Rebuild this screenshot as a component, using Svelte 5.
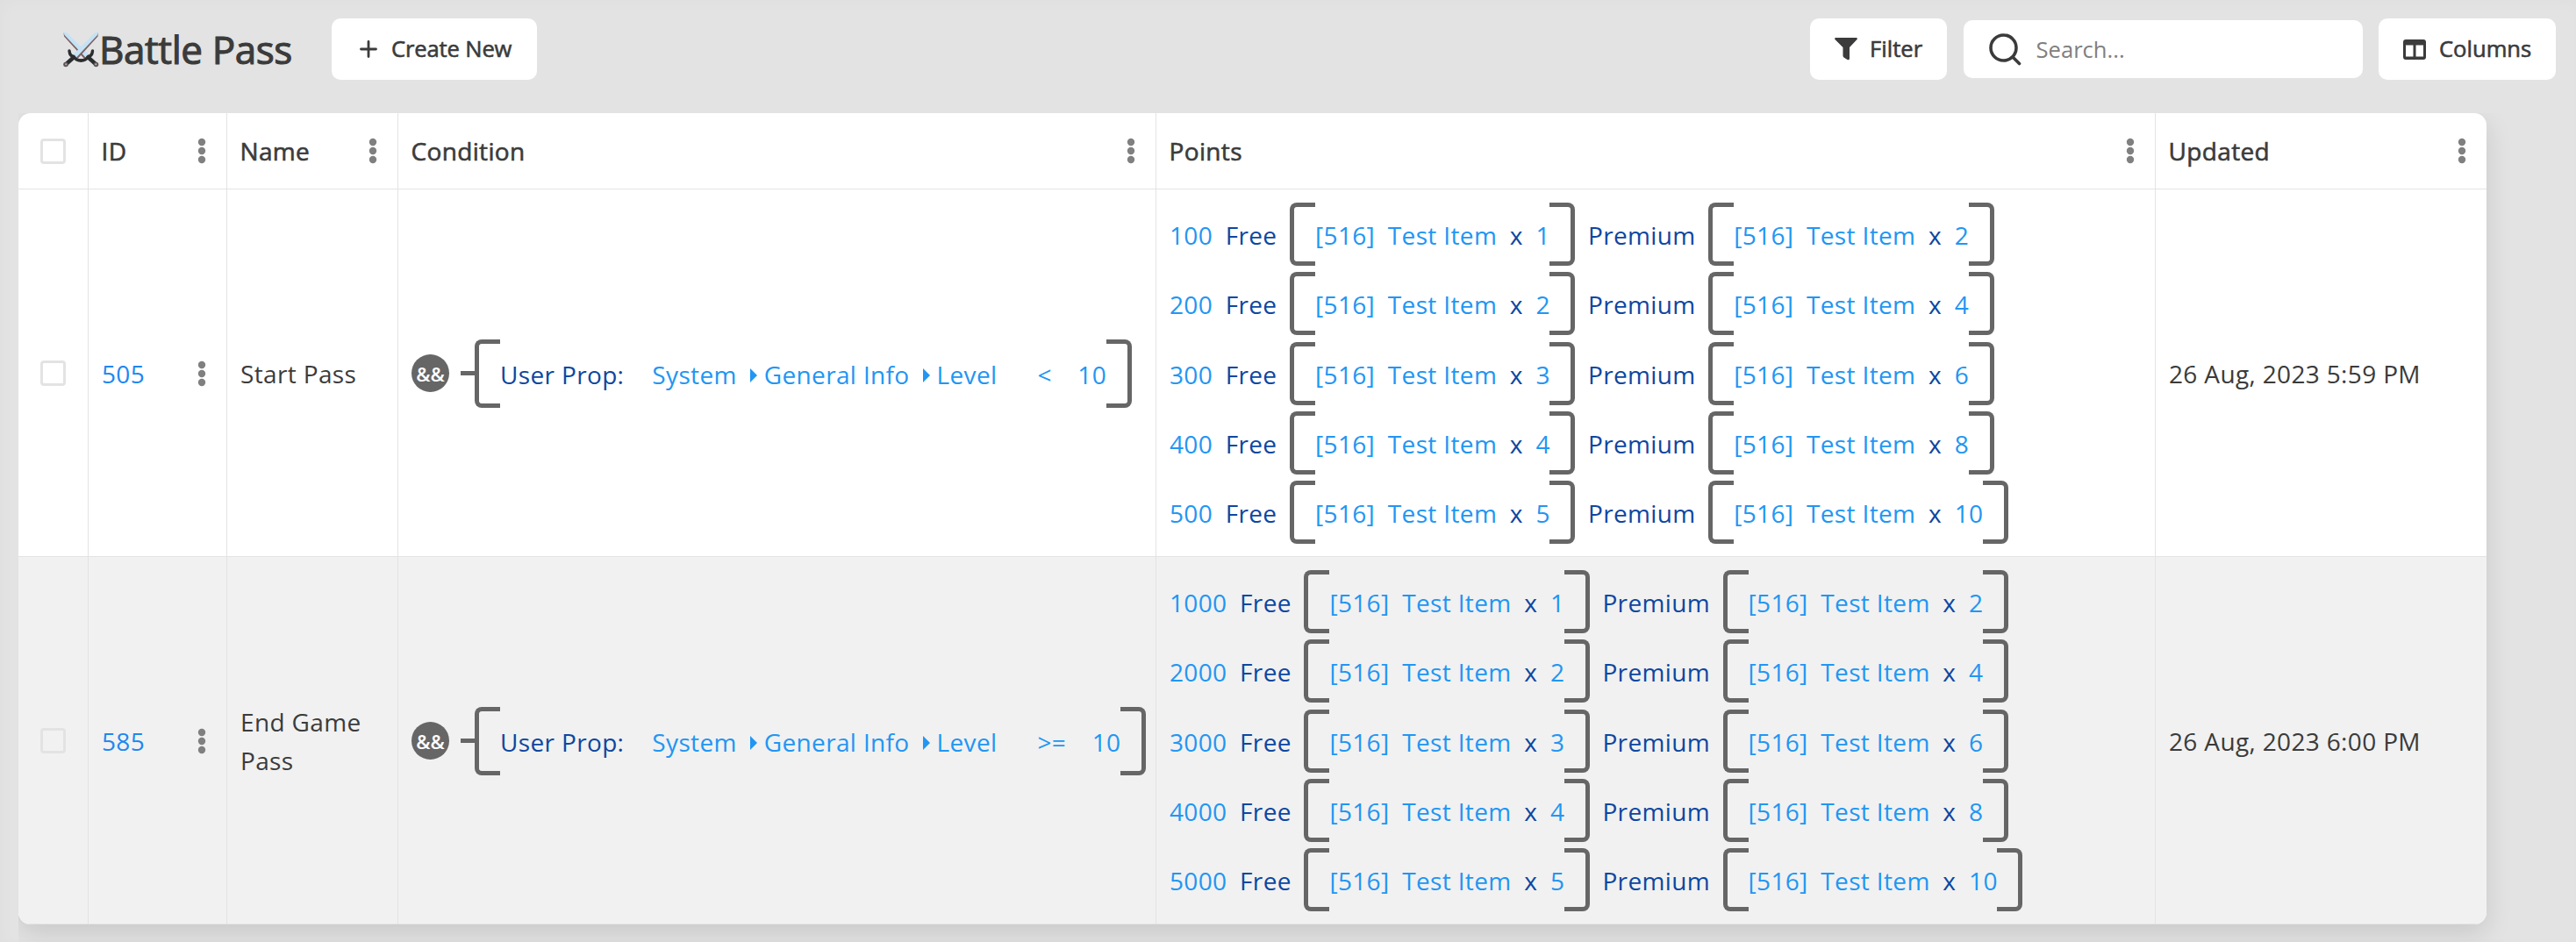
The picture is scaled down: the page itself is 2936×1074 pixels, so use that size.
<script lang="ts">
  type Point = { at: number; free: number; premium: number };

  const makePoints = (step: number): Point[] =>
    [1, 2, 3, 4, 5].map((n) => ({ at: n * step, free: n, premium: n * 2 }));

  const columns = ["ID", "Name", "Condition", "Points", "Updated"];

  const rows = [
    { id: 505, name: "Start Pass", op: "<", level: 10, points: makePoints(100), updated: "26 Aug, 2023 5:59 PM" },
    { id: 585, name: "End Game Pass", op: ">=", level: 10, points: makePoints(1000), updated: "26 Aug, 2023 6:00 PM" },
  ];
</script>

{#snippet dots()}
  <svg class="dots" width="10" height="30" viewBox="0 0 10 30">
    <circle cx="5" cy="5" r="4.2" />
    <circle cx="5" cy="15" r="4.2" />
    <circle cx="5" cy="25" r="4.2" />
  </svg>
{/snippet}

{#snippet sword()}
  <path d="M0.5 0.5L4.5 1.5L29 26L25 30L1 5Z" fill="#c3e2f6" />
  <path d="M0.5 1L1 5.500L24 31L25.500 29.500L1.500 4Z" fill="#7d6064" />
  <path d="M20 33Q26 33 28 29Q33 28 33.500 22" fill="none" stroke="#2b2d2f" stroke-width="3.4" stroke-linecap="round" />
  <path d="M27 28L37 37" stroke="#2b2d2f" stroke-width="4.4" />
  <circle cx="37.5" cy="37.5" r="2.8" fill="#5c5458" />
  <circle cx="37.3" cy="37.3" r="1.1" fill="#b9aeb3" />
{/snippet}

{#snippet reward(count: number)}
  <span class="bracket">
    <span class="light">[516]</span>
    <span class="light">Test Item</span>
    <span class="dark">x</span>
    <span class="light">{count}</span>
  </span>
{/snippet}

<main>
  <header>
    <h1>
      <svg width="41" height="41" viewBox="0 0 41 41">
        {@render sword()}
        <g transform="translate(40.5 0) scale(-1 1)">{@render sword()}</g>
      </svg>
      <span>Battle Pass</span>
    </h1>
    <button class="create">
      <svg width="20" height="20" viewBox="0 0 20 20"><path d="M10 1.5V18.5M1.5 10H18.5" stroke="#3b3b3b" stroke-width="2.8" stroke-linecap="round" /></svg>
      <span>Create New</span>
    </button>
    <div class="tools">
      <button class="filter">
        <svg width="26" height="26" viewBox="0 0 26 26"><path d="M1 0H25Q26.5 0.5 25.5 2L17 11V24Q16.5 26 14.5 25L10.5 22.5Q9.5 21.5 9.5 20.5V11L0.5 2Q-0.5 0.5 1 0Z" fill="#3b3b3b" /></svg>
        <span>Filter</span>
      </button>
      <label class="search">
        <svg width="37" height="37" viewBox="0 0 37 37" fill="none" stroke="#3b3b3b" stroke-width="3.6" stroke-linecap="round">
          <circle cx="16.5" cy="16.5" r="14.5" />
          <path d="M27.5 27.5L34.5 34.5" />
        </svg>
        <input type="text" placeholder="Search..." />
      </label>
      <button class="cols">
        <svg width="26" height="23" viewBox="0 0 26 23"><path fill="#3b3b3b" fill-rule="evenodd" d="M3 0H23Q26 0 26 3V20Q26 23 23 23H3Q0 23 0 20V3Q0 0 3 0ZM3 6.5V19.5H11.5V6.5ZM14.5 6.5V19.5H23V6.5Z" /></svg>
        <span>Columns</span>
      </button>
    </div>
  </header>

  <div class="wrap">
    <div class="table">
      <div class="row head">
        <div class="cell check"><span class="box"></span></div>
        {#each columns as title}
          <div class="cell title"><span>{title}</span>{@render dots()}</div>
        {/each}
      </div>
      {#each rows as row}
        <div class="row">
          <div class="cell check"><span class="box"></span></div>
          <div class="cell id"><span class="link">{row.id}</span>{@render dots()}</div>
          <div class="cell">{row.name}</div>
          <div class="cell">
            <span class="and">&&</span>
            <span class="dash"></span>
            <span class="bracket tall">
              <span class="dark">User Prop:</span>
              <span class="light path">System<i></i>General Info<i></i>Level</span>
              <span class="light op">{row.op}</span>
              <span class="light">{row.level}</span>
            </span>
          </div>
          <div class="cell points">
            {#each row.points as point}
              <div class="point">
                <span class="light">{point.at}</span>
                <span class="dark">Free</span>
                {@render reward(point.free)}
                <span class="dark">Premium</span>
                {@render reward(point.premium)}
              </div>
            {/each}
          </div>
          <div class="cell">{row.updated}</div>
        </div>
      {/each}
    </div>
  </div>
</main>

<style>
  :global(body) {
    background: #e3e3e3;
  }
  main {
    height: 1074px;
    box-sizing: border-box;
    overflow: hidden;
    box-shadow: inset 4px 4px 16px rgba(0, 0, 0, 0.02);
    font-family: "Open Sans", sans-serif;
    font-size: 28px;
    color: #3b3b3b;
  }
  header {
    display: flex;
    align-items: center;
    height: 112px;
    padding: 0 23px 0 72px;
    box-sizing: border-box;
    margin-bottom: 17px;
  }
  h1 {
    display: flex;
    align-items: center;
    width: 306px;
    margin: 0;
    font-size: 44px;
    font-weight: 400;
    letter-spacing: -0.4px;
    white-space: nowrap;
    -webkit-text-stroke: 1.1px #3b3b3b;
  }
  button {
    display: flex;
    align-items: center;
    height: 70px;
    padding: 0 0 0 28px;
    border: none;
    border-radius: 10px;
    box-sizing: border-box;
    background: #fff;
    color: #3b3b3b;
    font-family: inherit;
    font-size: 25.6px;
    font-weight: 400;
    white-space: nowrap;
    -webkit-text-stroke: 0.6px #3b3b3b;
  }
  button span {
    padding-bottom: 1px;
  }
  .create {
    width: 234px;
    gap: 16px;
    padding-left: 32px;
    letter-spacing: -0.15px;
  }
  .tools {
    display: flex;
    align-items: center;
    gap: 18.5px;
    margin-left: auto;
  }
  .filter {
    width: 156px;
    gap: 14px;
  }
  .search {
    display: flex;
    align-items: center;
    gap: 17px;
    width: 455px;
    height: 66px;
    padding-left: 29px;
    box-sizing: border-box;
    border-radius: 10px;
    background: #fff;
  }
  .search input {
    width: 340px;
    padding: 0;
    border: none;
    outline: none;
    background: none;
    font-family: inherit;
    font-size: 25.6px;
  }
  .search input::placeholder {
    color: #808080;
  }
  .cols {
    width: 202px;
    gap: 15px;
  }
  .wrap {
    margin-left: 21px;
    clip-path: inset(0 0 -40px 0);
  }
  .table {
    width: 2813px;
    border-radius: 14px;
    background: #fff;
    box-shadow: 0 10px 30px rgba(0, 0, 0, 0.12);
    overflow: hidden;
    letter-spacing: 0.35px;
  }
  .row {
    display: grid;
    grid-template-columns: 80px 158px 195px 864px 1139px 377px;
    height: 419px;
    box-sizing: border-box;
    border-bottom: 1px solid #e3e3e3;
  }
  .row.head {
    height: 87px;
  }
  .row:last-child {
    background: #f1f1f1;
  }
  .cell {
    display: flex;
    align-items: center;
    padding: 1px 0 0 15px;
    box-sizing: border-box;
    border-right: 1px solid #e3e3e3;
    line-height: 44px;
  }
  .cell:last-child {
    border-right: none;
  }
  .cell.check {
    justify-content: center;
    padding: 1px 0 0;
  }
  .box {
    width: 29px;
    height: 29px;
    box-sizing: border-box;
    border: 3px solid #e3e3e3;
    border-radius: 4px;
  }
  .title,
  .id {
    justify-content: space-between;
    padding-right: 23.5px;
  }
  .title {
    padding-top: 0;
    padding-left: 14.5px;
    -webkit-text-stroke: 0.6px #3b3b3b;
  }
  .dots {
    fill: #808080;
  }
  .link {
    color: #1e88f0;
  }
  .light {
    color: #2196f3;
  }
  .dark {
    color: #0d47a1;
  }
  .and {
    display: flex;
    align-items: center;
    justify-content: center;
    width: 43px;
    height: 43px;
    border-radius: 50%;
    background: #666;
    color: #fff;
    font-size: 22px;
    font-weight: 600;
    letter-spacing: 0;
  }
  .dash {
    width: 16px;
    height: 5px;
    margin-left: 13px;
    background: #666;
  }
  .bracket {
    position: relative;
    display: flex;
    align-items: center;
    gap: 14.7px;
    height: 72px;
    padding: 2px 28.5px 0 29px;
    box-sizing: border-box;
    white-space: nowrap;
  }
  .bracket::before,
  .bracket::after {
    content: "";
    position: absolute;
    top: 0;
    bottom: 0;
    width: 29px;
    box-sizing: border-box;
    border: 5px solid #666;
  }
  .bracket::before {
    left: 0;
    border-right: none;
    border-radius: 8px 0 0 8px;
  }
  .bracket::after {
    right: 0;
    border-left: none;
    border-radius: 0 8px 8px 0;
  }
  .tall {
    height: 78px;
    gap: 32px;
  }
  .path {
    display: flex;
    align-items: center;
  }
  .path i {
    margin: 2px 8px 0 15px;
    border: 8px solid transparent;
    border-left-color: #2196f3;
    border-right: none;
  }
  .op {
    margin: 0 -2.5px 0 14px;
  }
  .points {
    flex-direction: column;
    align-items: flex-start;
    justify-content: center;
    gap: 7.25px;
  }
  .point {
    display: flex;
    align-items: center;
    gap: 14.6px;
  }
  .point > .light,
  .point > .dark {
    padding-top: 2px;
  }
</style>
